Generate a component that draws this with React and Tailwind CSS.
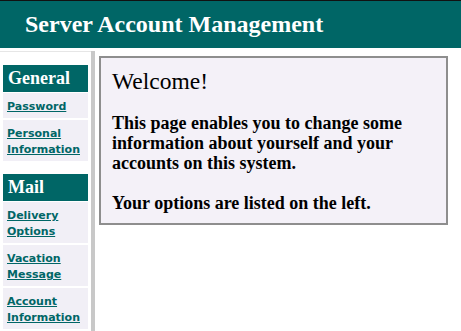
export default function App() {
  const serif = { fontFamily: '"Liberation Serif", "Times New Roman", serif' };

  const sections = [
    { title: "General", links: [["Password"], ["Personal", "Information"]] },
    {
      title: "Mail",
      links: [
        ["Delivery", "Options"],
        ["Vacation", "Message"],
        ["Account", "Information"],
      ],
    },
  ];

  return (
    <div className="min-h-screen bg-white" style={serif}>
      <header className="h-[48px] border-t border-[#111111] bg-[#006666] pl-[25px] pt-[11px]">
        <h1 className="text-[24px] font-bold leading-[24px] text-white">
          Server Account Management
        </h1>
      </header>

      <div className="mt-[3px] flex">
        <aside className="w-[91px] border-t border-[#e6e6e6] pl-[3px] pr-[3px] pt-[13px]">
          {sections.map((section, i) => (
            <div key={section.title} className={i > 0 ? "mt-[13px]" : ""}>
              <div className="flex h-[27px] items-center bg-[#006666] pl-[5px] text-[18px] font-bold text-white">
                {section.title}
              </div>
              <ul className="mt-[1px] flex flex-col gap-[2px]">
                {section.links.map((lines) => (
                  <li
                    key={lines.join(" ")}
                    className="bg-[#f1eff6] pb-[3px] pl-[4px] pt-[6px] text-[11px] font-bold leading-[16px]"
                    style={{ fontFamily: '"DejaVu Sans", Verdana, sans-serif' }}
                  >
                    <a href="#" className="text-[#006666] underline">
                      {lines.map((line, j) => (
                        <span key={line}>
                          {j > 0 && <br />}
                          {line}
                        </span>
                      ))}
                    </a>
                  </li>
                ))}
              </ul>
            </div>
          ))}
        </aside>

        <div className="min-h-[280px] w-[4px] bg-[#c8c8c8]" />

        <main className="flex-1 pl-[4px] pr-[13px] pt-[5px]">
          <div className="border-2 border-[#8e8e8e] bg-[#f4f1f8] px-[11px] pb-[10px] pt-[10px]">
            <h2 className="text-[23.5px] font-normal leading-[26px] text-black">
              Welcome!
            </h2>
            <p className="mt-[19px] text-[18px] font-bold leading-[20px] text-black">
              This page enables you to change some information about yourself
              and your accounts on this system.
              <br />
              <br />
              Your options are listed on the left.
            </p>
          </div>
        </main>
      </div>
    </div>
  );
}
